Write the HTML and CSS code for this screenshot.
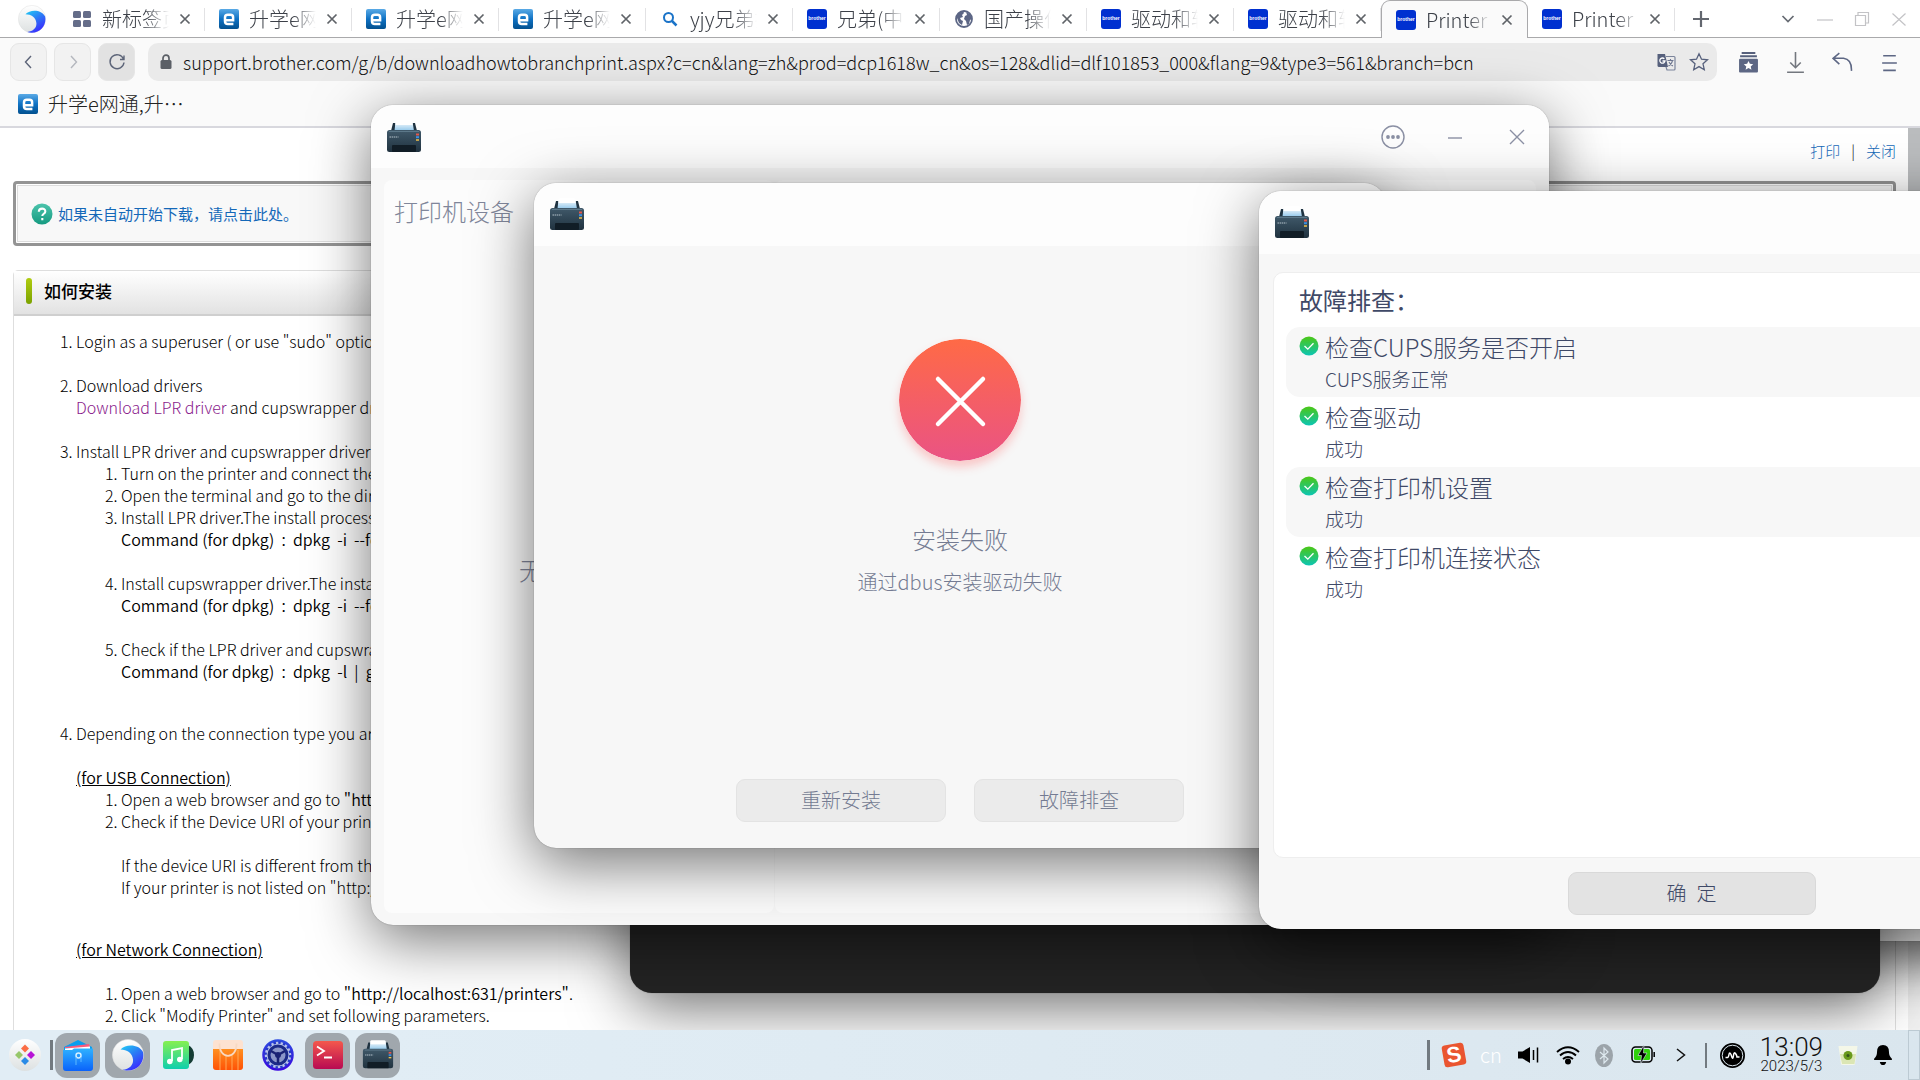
FILE: index.html
```html
<!DOCTYPE html>
<html lang="zh-CN">
<head>
<meta charset="utf-8">
<title>Printer</title>
<link rel="stylesheet" href="styles.css">
</head>
<body>
<svg class="defs" aria-hidden="true">
  <defs>
    <linearGradient id="g-e" x1="0" y1="0" x2="0" y2="1"><stop offset="0" stop-color="#5aaae6"/><stop offset=".5" stop-color="#0f72c4"/><stop offset="1" stop-color="#02508f"/></linearGradient>
    <linearGradient id="g-wave" x1="0" y1="0" x2=".6" y2="1"><stop offset="0" stop-color="#1fd0f5"/><stop offset=".5" stop-color="#2b7bf5"/><stop offset="1" stop-color="#3a2bff"/></linearGradient>
    <linearGradient id="g-ball" x1="0" y1="0" x2="0" y2="1"><stop offset="0" stop-color="#fff"/><stop offset="1" stop-color="#dde1e1"/></linearGradient>
    <linearGradient id="g-body" x1="0" y1="0" x2="0" y2="1"><stop offset="0" stop-color="#40596a"/><stop offset="1" stop-color="#20323f"/></linearGradient>
    <linearGradient id="g-paper" x1="0" y1="0" x2="0" y2="1"><stop offset="0" stop-color="#fff"/><stop offset="1" stop-color="#8fc6ea"/></linearGradient>
    <linearGradient id="g-ok" x1="0" y1="0" x2="0" y2="1"><stop offset="0" stop-color="#4cc714"/><stop offset="1" stop-color="#0cc5b4"/></linearGradient>
    <linearGradient id="g-fail" x1="0" y1="0" x2="0" y2="1"><stop offset="0" stop-color="#ff6a46"/><stop offset="1" stop-color="#ea5384"/></linearGradient>
    <linearGradient id="g-file" x1="0" y1="0" x2="0" y2="1"><stop offset="0" stop-color="#2fb2ff"/><stop offset="1" stop-color="#0a62fa"/></linearGradient>
    <linearGradient id="g-music" x1="0" y1="0" x2="0" y2="1"><stop offset="0" stop-color="#86f04f"/><stop offset="1" stop-color="#0fcfae"/></linearGradient>
    <linearGradient id="g-bag" x1="0" y1="0" x2="0" y2="1"><stop offset="0" stop-color="#ff9020"/><stop offset="1" stop-color="#ff5206"/></linearGradient>
    <linearGradient id="g-gear" x1="0" y1="0" x2="0" y2="1"><stop offset="0" stop-color="#2d4be0"/><stop offset="1" stop-color="#3a08e0"/></linearGradient>
    <linearGradient id="g-term" x1="0" y1="0" x2="0" y2="1"><stop offset="0" stop-color="#f4584c"/><stop offset="1" stop-color="#b80a52"/></linearGradient>
    <linearGradient id="g-help" x1="0" y1="0" x2="0" y2="1"><stop offset="0" stop-color="#4cc4ac"/><stop offset="1" stop-color="#159a80"/></linearGradient>
  </defs>
  <symbol id="i-e" viewBox="0 0 20 20"><rect width="20" height="20" rx="2" fill="url(#g-e)"/><path d="M5.500 11.200h8.600V8.300c0-1.700-.9-2.500-2.600-2.500H8.800C7 5.800 6 6.700 6 8.500v3.800c0 1.900 1 2.800 2.800 2.800h5.600" fill="none" stroke="#fff" stroke-width="2.500"/></symbol>
  <symbol id="i-wave" viewBox="0 0 32 32"><circle cx="16" cy="16" r="15.600" fill="url(#g-ball)" stroke="#ddd" stroke-width=".5"/><path d="M8.500 10.500C14 4.500 27 5 31 13c1.800 9-4 18.600-15.500 18.600-2 0-3.500-.3-5-.8C18 30 21.500 25.500 21 20.500 20.500 14 15 10.500 8.500 10.500Z" fill="url(#g-wave)"/></symbol>
  <symbol id="i-printer" viewBox="0 0 36 34"><path d="M5 11 7 3h22l2 8z" fill="#1f3341"/><path d="M8.500 11 9.500 1.500h17L28 11z" fill="url(#g-paper)"/><path d="M9.500 5V1.800q0-1.500 1.500-1.500h14q1.500 0 1.500 1.500V5z" fill="#fff"/><rect x="1" y="10" width="34" height="22" rx="2.500" fill="url(#g-body)"/><path d="M3 11.500h30" stroke="#5c7889"/><rect x="6" y="25" width="24" height="7" rx="1" fill="#111d26"/><path d="M3.500 17h9" stroke="#8a9ba6" stroke-width="1.500" stroke-dasharray="1.500 .6"/><path d="M30 14.500h3" stroke="#e2574c" stroke-width="2"/><path d="M30 17.200h3" stroke="#3b8fe0" stroke-width="2"/><path d="M30 20h3" stroke="#f0c14a" stroke-width="1.500"/></symbol>
  <symbol id="i-x" viewBox="0 0 12 12"><path d="m1.500 1.500 9 9m0-9-9 9" fill="none" stroke="currentColor" stroke-width="1.700"/></symbol>
  <symbol id="i-ok" viewBox="0 0 20 20"><circle cx="10" cy="10" r="9.500" fill="url(#g-ok)"/><path d="m5.500 10 3.300 3.200 5.700-6" fill="none" stroke="#fff" stroke-width="1.300"/></symbol>
</svg>

<div class="desktop">
  <div class="browser">
    <header class="tabbar">
      <svg class="logo"><use href="#i-wave"/></svg>
      <nav class="tabs">
        <div class="tab"><svg class="fav" viewBox="0 0 20 20"><g fill="#656d89"><rect x="1" y="2" width="8" height="7" rx="1.500"/><rect x="11" y="2" width="8" height="7" rx="1.500"/><rect x="1" y="11" width="8" height="7" rx="1.500"/><rect x="11" y="11" width="8" height="7" rx="1.500"/></g></svg><span class="label">新标签页</span><button class="close" aria-label="关闭标签"><svg><use href="#i-x"/></svg></button></div>
        <div class="tab"><svg class="fav"><use href="#i-e"/></svg><span class="label">升学e网通</span><button class="close" aria-label="关闭标签"><svg><use href="#i-x"/></svg></button></div>
        <div class="tab"><svg class="fav"><use href="#i-e"/></svg><span class="label">升学e网通</span><button class="close" aria-label="关闭标签"><svg><use href="#i-x"/></svg></button></div>
        <div class="tab"><svg class="fav"><use href="#i-e"/></svg><span class="label">升学e网通</span><button class="close" aria-label="关闭标签"><svg><use href="#i-x"/></svg></button></div>
        <div class="tab"><svg class="fav" viewBox="0 0 20 20"><circle cx="8.500" cy="8.500" r="4.500" fill="none" stroke="#1a73c8" stroke-width="2"/><path d="m12 12 4.500 4.500" stroke="#1a73c8" stroke-width="2.500"/></svg><span class="label">yjy兄弟打</span><button class="close" aria-label="关闭标签"><svg><use href="#i-x"/></svg></button></div>
        <div class="tab"><span class="fav brother">brother</span><span class="label">兄弟(中国</span><button class="close" aria-label="关闭标签"><svg><use href="#i-x"/></svg></button></div>
        <div class="tab"><svg class="fav" viewBox="0 0 20 20"><circle cx="10" cy="10" r="8" fill="#fff" stroke="#5c6685" stroke-width="1.800"/><path d="M3 6c2-3 4-4 6-4l1 2-2 2 1 2-3 1 1 2 2 1-1 4-3-2-2-5zM12 3l4 2 2 5-2 1-1 4-2 1-1-4-2-2 1-3 2-1z" fill="#5c6685"/></svg><span class="label">国产操作</span><button class="close" aria-label="关闭标签"><svg><use href="#i-x"/></svg></button></div>
        <div class="tab"><span class="fav brother">brother</span><span class="label">驱动和软件</span><button class="close" aria-label="关闭标签"><svg><use href="#i-x"/></svg></button></div>
        <div class="tab"><span class="fav brother">brother</span><span class="label">驱动和软件</span><button class="close" aria-label="关闭标签"><svg><use href="#i-x"/></svg></button></div>
        <div class="tab active"><span class="fav brother">brother</span><span class="label">Printer</span><button class="close" aria-label="关闭标签"><svg><use href="#i-x"/></svg></button></div>
        <div class="tab"><span class="fav brother">brother</span><span class="label">Printer</span><button class="close" aria-label="关闭标签"><svg><use href="#i-x"/></svg></button></div>
      </nav>
      <button class="plain newtab" aria-label="新建标签"><svg viewBox="0 0 18 18"><path d="M9 1v16M1 9h16" stroke="#63676f" stroke-width="2.200"/></svg></button>
      <div class="wincontrols">
        <button class="plain" aria-label="标签列表"><svg viewBox="0 0 16 16"><path d="m2.500 5 5.500 5.500L13.500 5" fill="none" stroke="#666b73" stroke-width="1.700"/></svg></button>
        <button class="plain" aria-label="最小化"><svg viewBox="0 0 16 16"><path d="M0 9h16" stroke="#c3c3c6" stroke-width="1.200"/></svg></button>
        <button class="plain" aria-label="还原"><svg viewBox="0 0 16 16"><path d="M1.500 4.500h10v10h-10zM4 4.500V1.500h10.500v10.500h-3" fill="none" stroke="#c3c3c6" stroke-width="1.200"/></svg></button>
        <button class="plain" aria-label="关闭"><svg viewBox="0 0 16 16"><path d="m1.500 2.500 13 12m0-12-13 12" stroke="#c3c3c6" stroke-width="1.200"/></svg></button>
      </div>
    </header>

    <div class="toolbar">
      <button class="tool" aria-label="后退"><svg viewBox="0 0 20 20"><path d="m12 4-5.500 6 5.500 6" fill="none" stroke="#5c6478" stroke-width="1.400"/></svg></button>
      <button class="tool" aria-label="前进"><svg viewBox="0 0 20 20"><path d="m8 4 5.500 6L8 16" fill="none" stroke="#b4b7be" stroke-width="1.400"/></svg></button>
      <button class="tool reload" aria-label="刷新"><svg viewBox="0 0 20 20"><path d="M16.500 7A7 7 0 1 0 17 10.500M17 3.500V7.500h-4" fill="none" stroke="#5c6478" stroke-width="1.400"/></svg></button>
      <div class="address">
        <svg class="lock" viewBox="0 0 12 16"><rect x=".5" y="6" width="11" height="9" rx="1.500" fill="#5b5f66"/><path d="M3 7V4.200a3 3 0 0 1 6 0V7" fill="none" stroke="#5b5f66" stroke-width="1.700"/></svg>
        <input class="url" type="text" aria-label="地址" value="support.brother.com/g/b/downloadhowtobranchprint.aspx?c=cn&amp;lang=zh&amp;prod=dcp1618w_cn&amp;os=128&amp;dlid=dlf101853_000&amp;flang=9&amp;type3=561&amp;branch=bcn">
        <button class="plain" aria-label="翻译"><svg viewBox="0 0 20 20"><path d="M2 2h7l3 13H3q-1.500 0-1.500-1.500V2.500z" fill="#56607c"/><path d="M10 4.500h8q1 0 1 1V17q0 1-1 1h-7l-1-3" fill="none" stroke="#7b849b" stroke-width="1.200"/><path d="M11.500 8.500h6M14.500 7v1.500M12.500 14q3.500-2 4-5.500M13 10q1.500 3 4 4" fill="none" stroke="#6d7690" stroke-width="1.100"/><path d="M8.300 6.800A2.600 2.600 0 1 0 9 9H6.500" fill="none" stroke="#fff" stroke-width="1.300"/></svg></button>
        <button class="plain" aria-label="收藏"><svg viewBox="0 0 20 20"><path d="m10 1.700 2.500 5.500 6 .6-4.500 4 1.300 5.900-5.300-3.100-5.300 3.100L6 11.800l-4.500-4 6-.6z" fill="none" stroke="#56607c" stroke-width="1.300"/></svg></button>
      </div>
      <div class="tools-right">
        <button class="plain" aria-label="收藏夹"><svg viewBox="0 0 20 20"><path d="M3.500 1h13M2 4h16" stroke="#56607c" stroke-width="1.800"/><rect x="1" y="6.500" width="18" height="13" rx="1" fill="#5d6784"/><path d="m10 8.500 1.300 2.800 3.200.3-2.400 2.100.7 3.100-2.800-1.600-2.800 1.600.7-3.100-2.400-2.100 3.200-.3z" fill="#fff"/></svg></button>
        <button class="plain" aria-label="下载"><svg viewBox="0 0 20 20"><path d="M10 0v15M5 10l5 5 5-5M2 19.300h16" fill="none" stroke="#73777e" stroke-width="1.500"/></svg></button>
        <button class="plain" aria-label="撤销"><svg viewBox="0 0 20 20"><path d="M7 1 1 6l6 5.500M1 6h10q8 1 7.500 12" fill="none" stroke="#5d6784" stroke-width="1.500"/></svg></button>
        <button class="plain" aria-label="菜单"><svg viewBox="0 0 20 20"><path d="M4 3.500h12M3 10.500h14M4 17.500h12" stroke="#5d6784" stroke-width="1.500"/></svg></button>
      </div>
    </div>
    <div class="bookmarks"><svg class="fav"><use href="#i-e"/></svg><a href="#">升学e网通,升…</a></div>

    <div class="viewport">
      <main class="page">
        <div class="toplinks"><a href="#">打印</a><span>|</span><a href="#">关闭</a></div>
        <div class="notice"><div class="notice-in"><svg viewBox="0 0 22 22"><circle cx="11" cy="11" r="10.500" fill="url(#g-help)"/><path d="M7.800 8.700c.2-4.200 6.600-4 6.500-.3 0 2.300-3 2.400-3 4.600M11.300 15v2.200" fill="none" stroke="#fff" stroke-width="2.100"/></svg><a href="#">如果未自动开始下载，请点击此处。</a></div></div>
        <section class="howto">
          <h1>如何安装</h1>
          <ol>
            <li>Login as a superuser ( or use "sudo" option ).</li>
            <li class="gap">Download drivers<br><a class="visited" href="#">Download LPR driver</a> and cupswrapper driver.</li>
            <li class="gap">Install LPR driver and cupswrapper driver
              <ol>
                <li>Turn on the printer and connect the cable.</li>
                <li>Open the terminal and go to the directory.</li>
                <li>Install LPR driver.The install process.<br><b>Command (for dpkg)&nbsp; :&nbsp; dpkg&nbsp; -i&nbsp; --force-all</b></li>
                <li class="gap">Install cupswrapper driver.The install process.<br><b>Command (for dpkg)&nbsp; :&nbsp; dpkg&nbsp; -i&nbsp; --force-all</b></li>
                <li class="gap">Check if the LPR driver and cupswrapper driver.<br><b>Command (for dpkg)&nbsp; :&nbsp; dpkg&nbsp; -l&nbsp; |&nbsp; grep Brother</b></li>
              </ol>
            </li>
            <li class="wide">Depending on the connection type you are using.
              <h2>(for USB Connection)</h2>
              <ol>
                <li>Open a web browser and go to <b>"http://localhost:631/printers"</b>.</li>
                <li>Check if the Device URI of your printer.
                  <p>If the device URI is different from the example.<br>If your printer is not listed on "http://localhost".</p>
                </li>
              </ol>
              <h2 class="wide">(for Network Connection)</h2>
              <ol class="gap">
                <li>Open a web browser and go to <b>"http://localhost:631/printers"</b>.</li>
                <li>Click "Modify Printer" and set following parameters.</li>
              </ol>
            </li>
          </ol>
        </section>
      </main>
      <div class="scroll"><div class="thumb"></div></div>
    </div>
  </div>

  <div class="win win-back"></div>
  <div class="win win-terminal"></div>

  <section class="win win-devices" aria-label="打印机设备">
    <header class="titlebar"><svg class="appicon"><use href="#i-printer"/></svg>
      <div class="winbtns">
        <button class="plain" aria-label="更多"><svg viewBox="0 0 24 24"><circle cx="12" cy="12" r="11" fill="none" stroke="#8b90a4" stroke-width="1.400"/><g fill="#8b90a4"><circle cx="7" cy="12" r="1.900"/><circle cx="12" cy="12" r="1.900"/><circle cx="17" cy="12" r="1.900"/></g></svg></button>
        <button class="plain" aria-label="最小化"><svg viewBox="0 0 24 24"><path d="M5 13h14" stroke="#8b90a4" stroke-width="1.400"/></svg></button>
        <button class="plain" aria-label="关闭"><svg viewBox="0 0 24 24"><path d="m5 5 14 14m0-14L5 19" stroke="#8b90a4" stroke-width="1.400"/></svg></button>
      </div>
    </header>
    <div class="devices-body">
      <div class="pane list"><h3>打印机设备</h3><p>无打印设备</p></div>
      <div class="pane"></div>
    </div>
  </section>

  <section class="win win-fail" aria-label="安装失败">
    <header class="titlebar"><svg class="appicon"><use href="#i-printer"/></svg></header>
    <div class="fail-body">
      <svg class="failicon" viewBox="0 0 122 122"><circle cx="61" cy="61" r="61" fill="url(#g-fail)"/><path d="m39 40 45 45m0-45-45 45" stroke="#fff" stroke-width="4.500" stroke-linecap="round"/></svg>
      <h3>安装失败</h3>
      <p>通过dbus安装驱动失败</p>
      <div class="actions"><button class="btn">重新安装</button><button class="btn">故障排查</button></div>
    </div>
  </section>

  <section class="win win-check" aria-label="故障排查">
    <header class="titlebar"><svg class="appicon"><use href="#i-printer"/></svg></header>
    <div class="check-body">
      <div class="card">
        <h3>故障排查：</h3>
        <ul>
          <li><svg><use href="#i-ok"/></svg><div><strong>检查CUPS服务是否开启</strong><span>CUPS服务正常</span></div></li>
          <li><svg><use href="#i-ok"/></svg><div><strong>检查驱动</strong><span>成功</span></div></li>
          <li><svg><use href="#i-ok"/></svg><div><strong>检查打印机设置</strong><span>成功</span></div></li>
          <li><svg><use href="#i-ok"/></svg><div><strong>检查打印机连接状态</strong><span>成功</span></div></li>
        </ul>
      </div>
      <button class="btn ok">确&ensp;定</button>
    </div>
  </section>

  <footer class="taskbar">
    <button class="plain start" aria-label="启动器"><svg viewBox="0 0 32 32"><circle cx="16" cy="16" r="16" fill="url(#g-ball)"/><g stroke-width="1" stroke-linejoin="round"><path d="m16 5.500 4 4-4 4-4-4z" fill="#fb6d45"/><path d="m10 12 4 4-4 4-4-4z" fill="#97c76a"/><path d="m22 12 4 4-4 4-4-4z" fill="#b713d6"/><path d="m16 18 4 4-4 4-4-4z" fill="#2a8be6"/></g></svg></button>
    <i class="bar"></i>
    <div class="apps">
      <button class="app on" aria-label="文件管理器"><svg viewBox="0 0 32 32"><path d="M2 8 16 1l14 7v8H2z" fill="#079ef0"/><path d="m3 8 24-3 1 4H3z" fill="#fb5a7c"/><path d="M3 9.500 28 7.500v4H3z" fill="#fff"/><path d="M1 11h9l2-1.500h19V29q0 3-3 3H4q-3 0-3-3z" fill="url(#g-file)"/><circle cx="16.500" cy="16.500" r="2.500" fill="none" stroke="#d6f0ff" stroke-width="1.500"/><path d="M14 18v8m5-8v5" stroke="#5cb8ff"/></svg></button>
      <button class="app on" aria-label="浏览器"><svg><use href="#i-wave"/></svg></button>
      <button class="app" aria-label="音乐"><svg viewBox="0 0 32 32"><path d="M26 6q6 3 6 10t-6 10z" fill="#143c34"/><rect x="1" y="2" width="26" height="28" rx="3" fill="url(#g-music)"/><path d="M10 22V11l10-2v11" fill="none" stroke="#fff" stroke-width="1.800"/><circle cx="7.800" cy="22.500" r="2.800" fill="#fff"/><circle cx="17.800" cy="20.500" r="2.800" fill="#fff"/></svg></button>
      <button class="app" aria-label="软件商店"><svg viewBox="0 0 32 32"><path d="M4 1h24q3 0 3 3v7H1V4q0-3 3-3z" fill="#fde2d0"/><path d="M1 10h30v18q0 3-3 3H4q-3 0-3-3z" fill="url(#g-bag)"/><path d="M8 11v20M14 16v15M20 16v15M26 11v20" stroke="#ffb060" stroke-width="1.500" opacity=".6"/><path d="M7.500 4.500C7 21 25 21 24.500 4.500" fill="none" stroke="#f8d9c2" stroke-width="1.800"/></svg></button>
      <button class="app" aria-label="控制面板"><svg viewBox="0 0 32 32"><circle cx="16" cy="16" r="14.500" fill="#b9c4e8" stroke="url(#g-gear)" stroke-width="2.500"/><circle cx="16" cy="16" r="12.500" fill="none" stroke="#2438c8" stroke-width="2.500" stroke-dasharray="2.500 2.400"/><circle cx="16" cy="16" r="9" fill="#8b96c8" stroke="#1c2a88" stroke-width="3"/><path d="M16 16v8M16 16 9 12m7 4 7-4" stroke="#1a2274" stroke-width="2.500"/><circle cx="16" cy="16" r="3" fill="#1a2274"/></svg></button>
      <button class="app on" aria-label="终端"><svg viewBox="0 0 32 32"><rect x="1" y="2" width="30" height="28" rx="3.500" fill="url(#g-term)"/><path d="m5 7.500 7 4.500-7 4.500M12 18.500h8" fill="none" stroke="#fff" stroke-width="1.800"/></svg></button>
      <button class="app on" aria-label="打印机"><svg viewBox="0 0 36 34"><use href="#i-printer"/></svg></button>
    </div>
    <div class="tray">
      <i class="bar"></i>
      <span class="sogou">S</span>
      <span class="lang">cn</span>
      <svg class="t24" viewBox="0 0 24 24"><path d="M1 8.500h4.500L13 4v16l-7.500-4.500H1z"/><path d="M16.500 7v10M20.500 4.500v15" stroke="#000" stroke-width="1.500"/></svg>
      <svg class="t24" viewBox="0 0 24 24"><path d="M1 9q11-9.500 22 0M4 12.500q8-7 16 0M7 16q5-4 10 0" fill="none" stroke="#000" stroke-width="1.900"/><circle cx="12" cy="18.500" r="3"/></svg>
      <svg class="bt" viewBox="0 0 18 23"><ellipse cx="9" cy="11.500" rx="9" ry="11.500" fill="#9ca4aa"/><path d="m5 8 8 7-4 4V4l4 4-8 7" fill="none" stroke="#dde8ee" stroke-width="1.200"/></svg>
      <svg class="t24 battery" viewBox="0 0 24 24"><rect x="1" y="4" width="20" height="15" rx="3.500" fill="none" stroke="#000" stroke-width="1.500"/><rect x="3" y="6" width="16" height="11" rx="1.500" fill="#2fd10a"/><path d="M23.200 9v5" stroke="#000" stroke-width="1.500"/><path d="M13 2 7 12.500h3.500L9.500 21l6.500-11h-3.500z" stroke="#dce8ef" stroke-width=".6"/></svg>
      <svg class="chev" viewBox="0 0 10 16"><path d="m1 2 7.500 6L1 14" fill="none" stroke="#111" stroke-width="1.500"/></svg>
      <i class="bar thin"></i>
      <svg class="t25" viewBox="0 0 25 25"><circle cx="12.500" cy="12.500" r="12.500"/><circle cx="12.500" cy="12.500" r="10.300" fill="none" stroke="#dce8ef" stroke-width="1"/><path d="M5.500 14.500h2q1 0 1.500-3t2 0l1 3q1 2 1.500-2t2-2 1.500 3.500h2.500" fill="none" stroke="#fff" stroke-width="1.500"/></svg>
      <div class="clock"><time>13:09</time><span>2023/5/3</span></div>
      <svg class="t20" viewBox="0 0 20 20"><path d="M.5 1h19L17 19q0 1-2 1H5q-2 0-2-1z" fill="#f4f7e8"/><path d="M2 9h16l-1.500 10H4z" fill="#dbe6b4"/><circle cx="10" cy="10.500" r="4.500" fill="#6a9a1c"/><circle cx="10" cy="10.500" r="1.500" fill="#35551a"/></svg>
      <svg class="t20" viewBox="0 0 20 24"><path d="M10 1q6.500 0 6.500 7.500 0 5 3.200 7.500v1.500H.3V16q3.200-2.500 3.200-7.500Q3.500 1 10 1zM6.500 19.500h7q-1 3.500-3.500 3.500t-3.500-3.500z"/></svg>
      <button class="peek" aria-label="显示桌面"></button>
    </div>
  </footer>
</div>
</body>
</html>
```
FILE: styles.css
```css
* { box-sizing: border-box; }

body, h1, h2, h3, p, ul, ol { margin: 0; padding: 0; }

body, button, input {
  font-family: "Noto Sans CJK SC", "Noto Sans", sans-serif;
  font-weight: 300;
}

body { color: #222; }
a { text-decoration: none; }
button { padding: 0; border: 0; background: none; color: inherit; }
svg { display: block; flex: none; }
.defs { position: absolute; width: 0; height: 0; }

.desktop {
  position: relative;
  display: flex;
  flex-direction: column;
  height: 100vh;
  overflow: hidden;
}

/* Browser */
.browser {
  flex: 1;
  min-height: 0;
  display: flex;
  flex-direction: column;
  background: #fafafa;
}

.plain { display: flex; align-items: center; justify-content: center; flex: none; }

.tabbar {
  display: flex;
  align-items: center;
  height: 38px;
  padding-left: 18px;
  background: #fff;
  border-bottom: 1px solid #a9a9ab;
}
.logo { width: 28px; height: 28px; margin-right: 12px; }
.tabs { display: flex; align-self: stretch; }
.tab {
  position: relative;
  display: flex;
  align-items: center;
  gap: 10px;
  width: 147px;
  height: 38px;
  padding: 0 14px;
}
.tab::after {
  content: "";
  position: absolute;
  right: 0;
  top: 8px;
  width: 1px;
  height: 23px;
  background: #e2e2e4;
}
.tab.active {
  background: #fafafa;
  border: 1px solid #a9a9ab;
  border-bottom: 0;
  border-radius: 9px 9px 0 0;
}
.tab.active::after { display: none; }
.fav { width: 20px; height: 20px; flex: none; }
.brother {
  border-radius: 3px;
  background: #0030d0;
  color: #fff;
  font: 700 5px/19px "Liberation Sans", sans-serif;
  text-align: center;
}
.label {
  flex: 1;
  min-width: 0;
  overflow: hidden;
  white-space: nowrap;
  font-size: 20px;
  line-height: 30px;
  color: #3c4048;
  -webkit-mask-image: linear-gradient(90deg, #000 65%, transparent);
  mask-image: linear-gradient(90deg, #000 65%, transparent);
}
.close { color: #5f6368; }
.close svg { width: 12px; height: 12px; }
.newtab { margin-left: 17px; }
.newtab svg { width: 18px; height: 18px; }
.wincontrols { display: flex; gap: 21px; margin-left: auto; padding-right: 13px; }
.wincontrols svg { width: 16px; height: 16px; }

.toolbar { display: flex; align-items: center; gap: 7px; padding: 5px 20px 0 10px; height: 43px; }
.tool {
  display: flex;
  align-items: center;
  justify-content: center;
  width: 37px;
  height: 38px;
  border: 1px solid #e6e6e6;
  border-radius: 9px;
  background: #f2f2f2;
}
.tool svg { width: 20px; height: 20px; }
.reload { background: #e2e2e2; }
.address {
  flex: 1;
  display: flex;
  align-items: center;
  gap: 13px;
  height: 38px;
  margin-left: 6px;
  padding: 0 8px 0 12px;
  border-radius: 10px;
  background: #eaeaea;
}
.lock { width: 12px; height: 16px; margin-right: -2px; }
.url {
  flex: 1;
  min-width: 0;
  padding: 0;
  border: 0;
  outline: 0;
  background: none;
  color: #111;
  font-size: 18px;
  line-height: 26px;
}
.address .plain svg { width: 20px; height: 20px; }
.tools-right { display: flex; gap: 26px; padding-left: 14px; }
.tools-right svg { width: 21px; height: 21px; }

.bookmarks {
  display: flex;
  align-items: center;
  gap: 10px;
  height: 47px;
  padding-left: 18px;
  border-bottom: 2px solid #d8d8de;
}
.bookmarks a { color: #222; font-size: 20px; line-height: 30px; }

/* Web page */
.viewport { flex: 1; min-height: 0; display: flex; background: #fff; }
.page { flex: 1; min-width: 0; overflow: hidden; padding: 0 12px 0 13px; }
.scroll { width: 12px; background: #f1f1f1; }
.thumb { height: 400px; background: #babcbe; }

.toplinks {
  display: flex;
  justify-content: flex-end;
  gap: 11px;
  height: 53px;
  padding-top: 12px;
  font-size: 15px;
  line-height: 22px;
  color: #111;
}
.toplinks a, .notice a { color: #1468b8; }

.notice {
  padding: 1px;
  border: 3px solid #949494;
  border-radius: 4px;
}
.notice-in {
  display: flex;
  align-items: center;
  gap: 5px;
  height: 57px;
  padding-left: 13px;
  border: 1px solid #dcdcdc;
  background: #f8f8f8;
  font-size: 15px;
  font-weight: 400;
}
.notice svg { width: 22px; height: 22px; }

.howto {
  min-height: 900px;
  margin-top: 24px;
  border: 1px solid #dedede;
  border-radius: 5px;
  font-size: 16px;
  line-height: 22px;
  color: #000;
}
.howto h1 {
  display: flex;
  align-items: center;
  height: 45px;
  padding: 0 0 4px 12px;
  border-bottom: 2px solid #cfcfcf;
  background: linear-gradient(#fff, #e2e2e2);
  font-size: 17px;
  font-weight: 500;
}
.howto h1::before {
  content: "";
  width: 6px;
  height: 26px;
  margin-right: 12px;
  border-radius: 3px;
  background: linear-gradient(#b0cc10, #7ba200);
}
.howto > ol { padding: 14px 0 0 62px; }
.howto ol ol { padding-left: 45px; }
.howto .gap { margin-top: 22px; }
.howto .wide { margin-top: 40px; }
.howto b { font-weight: 350; }
.howto h2 {
  margin-top: 22px;
  font-size: 16px;
  font-weight: 350;
  text-decoration: underline;
}
.howto p { margin-top: 22px; }
.visited { color: #8a1a8c; }

/* Floating windows */
.win {
  position: absolute;
  display: flex;
  flex-direction: column;
  border-radius: 22px;
  background: #f7f7f7;
  box-shadow: 0 0 1px rgba(0, 0, 0, .5), 0 15px 60px rgba(0, 0, 0, .55);
}
.win-back { left: 1300px; top: 300px; width: 860px; height: 641px; }
.win-terminal { left: 630px; top: 340px; width: 1250px; height: 653px; background: #232323; }
.win-devices { left: 371px; top: 105px; width: 1178px; height: 820px; }
.win-fail { left: 534px; top: 183px; width: 852px; height: 665px; }
.win-check { left: 1259px; top: 191px; width: 865px; height: 738px; }

.titlebar {
  display: flex;
  align-items: center;
  justify-content: space-between;
  height: 63px;
  padding: 0 20px 0 15px;
  border-radius: 22px 22px 0 0;
  background: #fdfdfd;
}
.appicon { width: 36px; height: 34px; }
.winbtns { display: flex; gap: 38px; }
.winbtns svg { width: 24px; height: 24px; }

.devices-body { flex: 1; display: flex; gap: 1px; padding: 12px 13px; }
.pane { flex: 2; background: #fcfcfc; border-radius: 8px; }
.list { flex: 0 0 390px; display: flex; flex-direction: column; color: #80869a; font-size: 24px; }
.pane h3 { padding: 11px 10px; font-size: 24px; line-height: 40px; font-weight: 300; }
.pane p { margin: auto; padding-bottom: 16px; line-height: 36px; }

.fail-body {
  flex: 1;
  display: flex;
  flex-direction: column;
  align-items: center;
  padding: 93px 0 26px;
  color: #747b92;
}
.failicon { width: 122px; height: 122px; border-radius: 50%; box-shadow: 0 6px 10px rgba(255, 90, 90, .3); }
.fail-body h3 { margin-top: 60px; font-size: 24px; line-height: 36px; font-weight: 300; }
.fail-body p { margin-top: 9px; font-size: 20px; line-height: 32px; }
.actions { display: flex; gap: 28px; margin-top: auto; }
.btn {
  width: 210px;
  height: 43px;
  padding-bottom: 2px;
  border: 1px solid #e3e3e3;
  border-radius: 9px;
  background: #ebebeb;
  font-size: 20px;
  line-height: 30px;
}

.check-body { flex: 1; display: flex; flex-direction: column; align-items: center; padding: 18px 14px 14px; color: #3f4967; }
.card { flex: 1; align-self: stretch; padding: 9px 12px; border: 1px solid #eee; border-radius: 10px; background: #fff; }
.card h3 { padding: 0 13px 9px; font-size: 24px; line-height: 36px; font-weight: 400; }
.card ul { list-style: none; }
.card li { display: flex; gap: 6px; height: 70px; padding: 2px 13px; border-radius: 14px; }
.card li:nth-child(odd) { background: #f7f7f7; }
.card li svg { width: 20px; height: 20px; margin-top: 7px; }
.card strong { display: block; font-size: 24px; line-height: 36px; font-weight: 300; }
.card span { display: block; font-size: 19px; line-height: 27px; }
.ok { width: 248px; margin-top: 14px; border-color: #d9d9d9; background: #e3e3e3; color: #3f4967; }

/* Taskbar */
.taskbar {
  position: relative;
  display: flex;
  align-items: center;
  height: 50px;
  padding-left: 9px;
  background: linear-gradient(90deg, #e1edf5 20%, #dae6ee);
}
.start svg { width: 32px; height: 32px; }
.bar { width: 3px; height: 30px; margin: 0 2px 0 9px; background: #727a80; }
.apps { display: flex; gap: 5px; }
.app {
  display: flex;
  align-items: center;
  justify-content: center;
  width: 45px;
  height: 45px;
  border-radius: 12px;
}
.on { background: #a0a7ad; }
.app svg { width: 32px; height: 32px; }
.tray { display: flex; align-items: center; gap: 15px; margin-left: auto; align-self: stretch; }
.tray .bar { margin: 0 -2px 0 0; }
.tray .thin { width: 2px; height: 25px; margin: 0 -2px 0 4px; }
.sogou {
  width: 22px;
  height: 22px;
  border-radius: 3px;
  background: #ea5530;
  color: #fff;
  font: 700 22px/22px "Liberation Sans", sans-serif;
  text-align: center;
  transform: rotate(-10deg);
}
.lang { color: #fff; font-size: 20px; line-height: 28px; }
.t24 { width: 24px; height: 24px; }
.t25 { width: 25px; height: 25px; }
.t20 { width: 20px; height: 22px; }
.bt { width: 18px; height: 23px; }
.battery { margin: 0 6px 0 3px; }
.chev { width: 10px; height: 16px; }
.clock {
  display: flex;
  flex-direction: column;
  align-items: center;
  padding-bottom: 2px;
  font-family: Roboto, sans-serif;
  color: #111;
}
.clock time { font-size: 26px; line-height: 24px; }
.clock span { font-size: 15px; line-height: 14px; }
.peek { align-self: stretch; width: 12px; border: 1px solid #bccad3; }
```
